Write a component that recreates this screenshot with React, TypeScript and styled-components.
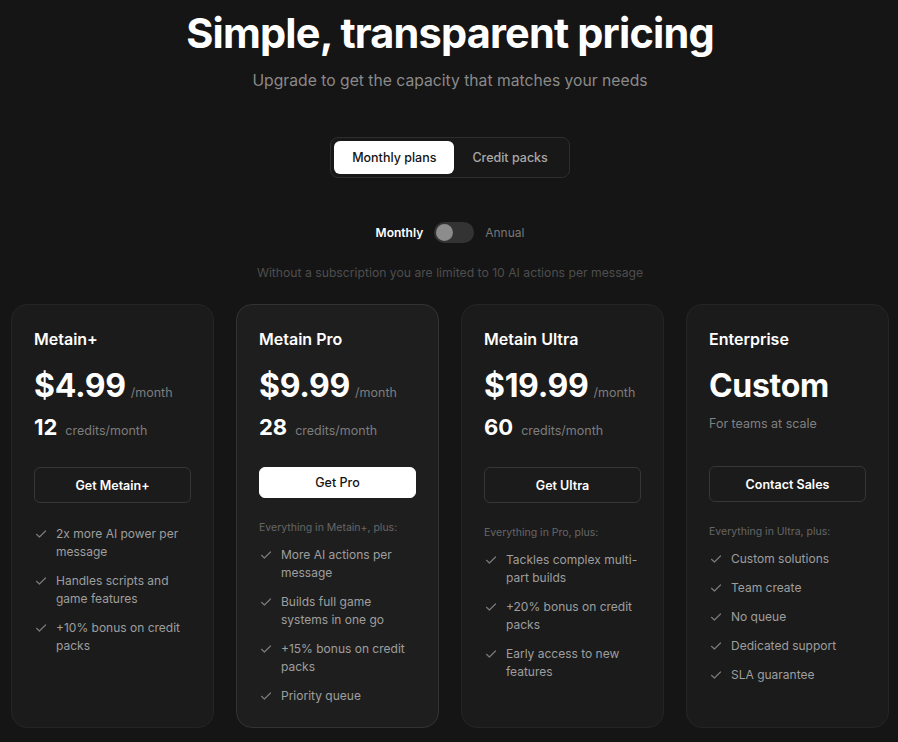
import React from "react";
import styled, { createGlobalStyle } from "styled-components";

const Global = createGlobalStyle`
  html, body { margin: 0; padding: 0; background: #151515; }
  body { font-family: Inter, "Noto Sans", sans-serif; color: #fff; -webkit-font-smoothing: antialiased; }
  * { box-sizing: border-box; }
`;

const Page = styled.div`
  min-height: 742px;
  background: #151515;
  padding: 9px 9px 20px 11px;
  display: flex;
  flex-direction: column;
  align-items: center;
`;

const Title = styled.h1`
  margin: 0;
  font-size: 41.5px;
  line-height: 48px;
  font-weight: 700;
  letter-spacing: -0.02em;
  color: #fff;
  text-align: center;
`;

const Subtitle = styled.p`
  margin: 14px 0 0;
  font-size: 15.7px;
  line-height: 20px;
  color: #8a8a8a;
  text-align: center;
`;

const Tabs = styled.div`
  margin-top: 46px;
  display: flex;
  padding: 3px;
  border: 1px solid #2e2e2e;
  border-radius: 8px;
  background: #181818;
`;

const Tab = styled.button<{ $active?: boolean }>`
  border: 0;
  height: 33px;
  padding: 0 18px;
  border-radius: 6px;
  font-family: inherit;
  font-size: 12.5px;
  font-weight: 500;
  background: ${(p) => (p.$active ? "#fff" : "transparent")};
  color: ${(p) => (p.$active ? "#141414" : "#a8a8a8")};
  cursor: pointer;
`;

const ToggleRow = styled.div`
  margin-top: 44px;
  display: flex;
  align-items: center;
  gap: 11px;
  font-size: 12px;
`;

const ToggleLabel = styled.span<{ $on?: boolean }>`
  color: ${(p) => (p.$on ? "#fff" : "#777")};
  font-weight: ${(p) => (p.$on ? 600 : 400)};
`;

const Switch = styled.div`
  width: 40px;
  height: 21px;
  border-radius: 11px;
  background: #333;
  padding: 2px;
  display: flex;
  align-items: center;
`;

const Knob = styled.div`
  width: 17px;
  height: 17px;
  border-radius: 50%;
  background: #8c8c8c;
`;

const Note = styled.p`
  margin: 22px 0 0;
  font-size: 12.2px;
  line-height: 16px;
  color: #4e4e4e;
  text-align: center;
`;

const Grid = styled.div`
  margin-top: 23px;
  align-self: stretch;
  display: grid;
  grid-template-columns: repeat(4, 203px);
  gap: 22px;
`;

const Card = styled.div<{ $featured?: boolean }>`
  height: 424px;
  border-radius: 16px;
  background: ${(p) => (p.$featured ? "#1e1e1e" : "#1b1b1b")};
  border: 1px solid ${(p) => (p.$featured ? "#333" : "#252525")};
  padding: 24px 22px 22px;
  display: flex;
  flex-direction: column;
`;

const PlanName = styled.div`
  font-size: 16px;
  line-height: 20px;
  font-weight: 600;
  color: #fff;
`;

const PriceRow = styled.div`
  margin-top: 17px;
  height: 40px;
  display: flex;
  align-items: baseline;
  gap: 5px;
`;

const Price = styled.span`
  font-size: 32px;
  line-height: 40px;
  font-weight: 700;
  letter-spacing: -0.01em;
  color: #fff;
`;

const Unit = styled.span`
  font-size: 12.5px;
  color: #7d7d7d;
`;

const CreditsRow = styled.div`
  margin-top: 7px;
  height: 28px;
  display: flex;
  align-items: baseline;
  gap: 8px;
`;

const Credits = styled.span`
  font-size: 22px;
  line-height: 28px;
  font-weight: 700;
  color: #fff;
`;

const Tagline = styled.div`
  margin-top: 9px;
  height: 25px;
  font-size: 12.5px;
  line-height: 18px;
  color: #808080;
`;

const CTA = styled.button<{ $primary?: boolean }>`
  margin-top: 26px;
  height: 36px;
  width: 100%;
  border-radius: 6px;
  font-family: inherit;
  font-size: 12.5px;
  font-weight: ${(p) => (p.$primary ? 500 : 600)};
  border: 1px solid ${(p) => (p.$primary ? "#fff" : "#363636")};
  background: ${(p) => (p.$primary ? "#fff" : "transparent")};
  color: ${(p) => (p.$primary ? "#141414" : "#fff")};
  cursor: pointer;
`;

const Features = styled.div`
  margin-top: 22px;
  display: flex;
  flex-direction: column;
`;

const FeatureHeading = styled.div`
  font-size: 10.5px;
  line-height: 16px;
  color: #666;
  margin-bottom: 10px;
`;

const FeatureList = styled.ul`
  list-style: none;
  margin: 0;
  padding: 0;
  display: flex;
  flex-direction: column;
  gap: 11px;
`;

const FeatureItem = styled.li`
  display: flex;
  gap: 8px;
  font-size: 12px;
  line-height: 18px;
  color: #9e9e9e;
`;

const CheckBox = styled.span`
  flex: none;
  width: 14px;
  height: 18px;
  display: flex;
  align-items: center;
  justify-content: center;
`;

const CheckIcon = () => (
  <svg width="12" height="12" viewBox="0 0 12 12" fill="none">
    <path d="M1.5 6.3 L4.4 9 L10.5 3" stroke="#7a7a7a" strokeWidth="1.2" strokeLinecap="round" strokeLinejoin="round" />
  </svg>
);

type Plan = {
  name: string;
  price?: string;
  credits?: string;
  tagline?: string;
  cta: string;
  featured?: boolean;
  heading?: string;
  features: string[];
};

const plans: Plan[] = [
  {
    name: "Metain+",
    price: "$4.99",
    credits: "12",
    cta: "Get Metain+",
    features: ["2x more AI power per message", "Handles scripts and game features", "+10% bonus on credit packs"],
  },
  {
    name: "Metain Pro",
    price: "$9.99",
    credits: "28",
    cta: "Get Pro",
    featured: true,
    heading: "Everything in Metain+, plus:",
    features: ["More AI actions per message", "Builds full game systems in one go", "+15% bonus on credit packs", "Priority queue"],
  },
  {
    name: "Metain Ultra",
    price: "$19.99",
    credits: "60",
    cta: "Get Ultra",
    heading: "Everything in Pro, plus:",
    features: ["Tackles complex multi-part builds", "+20% bonus on credit packs", "Early access to new features"],
  },
  {
    name: "Enterprise",
    tagline: "For teams at scale",
    cta: "Contact Sales",
    heading: "Everything in Ultra, plus:",
    features: ["Custom solutions", "Team create", "No queue", "Dedicated support", "SLA guarantee"],
  },
];

export default function App() {
  return (
    <>
      <Global />
      <Page>
        <Title>Simple, transparent pricing</Title>
        <Subtitle>Upgrade to get the capacity that matches your needs</Subtitle>
        <Tabs>
          <Tab $active>Monthly plans</Tab>
          <Tab>Credit packs</Tab>
        </Tabs>
        <ToggleRow>
          <ToggleLabel $on>Monthly</ToggleLabel>
          <Switch>
            <Knob />
          </Switch>
          <ToggleLabel>Annual</ToggleLabel>
        </ToggleRow>
        <Note>Without a subscription you are limited to 10 AI actions per message</Note>
        <Grid>
          {plans.map((p) => (
            <Card key={p.name} $featured={p.featured}>
              <PlanName>{p.name}</PlanName>
              <PriceRow>
                <Price>{p.price ?? "Custom"}</Price>
                {p.price && <Unit>/month</Unit>}
              </PriceRow>
              {p.credits ? (
                <CreditsRow>
                  <Credits>{p.credits}</Credits>
                  <Unit>credits/month</Unit>
                </CreditsRow>
              ) : (
                <Tagline>{p.tagline}</Tagline>
              )}
              <CTA $primary={p.featured}>{p.cta}</CTA>
              <Features>
                {p.heading && <FeatureHeading>{p.heading}</FeatureHeading>}
                <FeatureList>
                  {p.features.map((f) => (
                    <FeatureItem key={f}>
                      <CheckBox>
                        <CheckIcon />
                      </CheckBox>
                      <span>{f}</span>
                    </FeatureItem>
                  ))}
                </FeatureList>
              </Features>
            </Card>
          ))}
        </Grid>
      </Page>
    </>
  );
}
